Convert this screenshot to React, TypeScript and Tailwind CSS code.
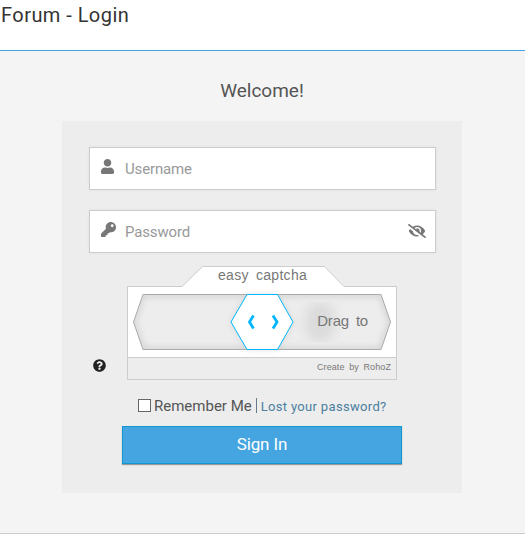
import { FaUser, FaKey, FaQuestionCircle, FaEyeSlash } from "react-icons/fa";

function CaptchaFrame() {
  return (
    <svg className="absolute inset-0" width="270" height="114" viewBox="0 0 270 114" fill="none">
      <defs>
        <radialGradient id="spot" cx="0.5" cy="0.5" r="0.5">
          <stop offset="0" stopColor="#d9d9d9" />
          <stop offset="0.35" stopColor="#dddddd" />
          <stop offset="1" stopColor="#ebebeb" stopOpacity="0" />
        </radialGradient>
        <clipPath id="track">
          <path d="M6.5 56 16 28.5H254L263.5 56 254 83.5H16Z" />
        </clipPath>
        <clipPath id="spotArea">
          <path d="M160 36H240V76H160Z" />
        </clipPath>
        <filter id="soft" x="-20%" y="-20%" width="140%" height="140%">
          <feGaussianBlur stdDeviation="3" />
        </filter>
      </defs>
      <path d="M.5 20.5H55L75.5 .5H197.5L217 20.5H269.5V91.5H.5Z" fill="#fff" />
      <path d="M.5 91.5V20.5H55L75.5 .5H197.5L217 20.5H269.5V91.5" stroke="#ccc" />
      <path d="M.5 91.5H269.5V113.5H.5Z" fill="#ededed" stroke="#ccc" />
      <g clipPath="url(#track)">
        <path d="M0 20H270V90H0Z" fill="#ededed" />
        <path d="M6.5 56 16 28.5H254L263.5 56 254 83.5H16Z" stroke="#ccc" strokeWidth="4" filter="url(#soft)" />
        <ellipse cx="193" cy="56" rx="28" ry="38" fill="url(#spot)" clipPath="url(#spotArea)" />
      </g>
      <path d="M6.5 56 16 28.5H254L263.5 56 254 83.5H16Z" stroke="#aaa" />
      <path d="M104 56 120 28.5H150.5L166 56 150.5 83.5H120Z" fill="#bbb" opacity=".5" filter="url(#soft)" />
      <path d="M104 56 120 28.5H150.5L166 56 150.5 83.5H120Z" fill="#fff" stroke="#00b7ff" />
      <path d="M126.5 49.5 122.5 56 126.5 62.5M146 49.5 150 56 146 62.5" stroke="#00b7ff" strokeWidth="2.8" />
    </svg>
  );
}

const inputBox = "flex h-[43px] items-center border border-[#ccc] bg-white text-[#777] shadow-[0_0_3px_rgba(0,0,0,0.06)]";

export default function App() {
  return (
    <div className="flex h-[534px] w-[525px] flex-col overflow-hidden border-b border-[#ccc] bg-[#f4f4f4] font-['Roboto',sans-serif] whitespace-nowrap">
      <header className="h-[51px] shrink-0 border-b border-[#44a5e0] bg-white pt-[2px] pl-px text-[20px] leading-[26px] tracking-[0.45px] text-[#333]">
        Forum - Login
      </header>
      <main className="flex w-[524px] flex-col items-center">
        <h1 className="mt-[27px] h-[43px] text-[19px] leading-[26px] text-[#555]">Welcome!</h1>
        <form className="flex h-[372px] w-[400px] flex-col bg-[#ededed] px-[27px] pt-[26px]">
          <div className={`${inputBox} mr-[-1px]`}>
            <FaUser className="ml-[10px] h-[15px] w-[15px] -translate-y-[2px]" />
            <span className="ml-[10px] pt-px text-[15px] tracking-[-0.15px] text-[#999]">Username</span>
          </div>
          <div className={`${inputBox} mt-5 mr-[-1px]`}>
            <FaKey className="ml-[11px] h-[15px] w-[15px] -translate-y-[2px]" />
            <span className="ml-[9px] grow pt-px text-[15px] tracking-[-0.15px] text-[#999]">Password</span>
            <FaEyeSlash className="mr-[9px] h-[18px] w-[18px] -translate-y-px" />
          </div>
          <div className="mt-[13px] flex">
            <div className="w-[38px] pt-[93px] pl-1">
              <FaQuestionCircle className="h-[13px] w-[13px] text-[#222]" />
            </div>
            <div className="relative h-[114px] w-[270px] font-['Liberation_Sans',sans-serif] text-[#777]">
              <CaptchaFrame />
              <div className="relative flex h-full flex-col">
                <div className="h-[28px] pl-[91px] text-[14px] leading-[18px] tracking-[0.3px] [word-spacing:3px]">easy captcha</div>
                <div className="flex h-[63px] justify-end pt-[17px] pr-[29px] text-[15px] leading-5 tracking-[-0.2px] [word-spacing:3px]">Drag to</div>
                <div className="pr-[6px] text-right text-[9px] leading-[20px] tracking-[0.1px] [word-spacing:2px]">Create by RohoZ</div>
              </div>
            </div>
          </div>
          <div className="mt-[15px] flex h-[22px] items-center pl-[49px] text-[15px] text-[#555]">
            <span className="h-[13px] w-[13px] -translate-y-px border border-[#666] bg-white" />
            <span className="ml-[3px]">Remember Me</span>
            <span className="ml-[4px] h-[15px] w-px -translate-y-px bg-[#667c8a]" />
            <a className="ml-[4px] pt-px text-[13px] tracking-[0.33px] text-[#4b7f9e]">Lost your password?</a>
          </div>
          <button className="mt-[9px] ml-[33px] h-[38px] w-[280px] border border-[#0f99d0] bg-[#44a5e0] pb-[2px] text-[17px] leading-[34px] tracking-[-0.1px] text-white shadow-[0_1px_1px_rgba(0,0,0,0.35)]">
            Sign In
          </button>
        </form>
      </main>
    </div>
  );
}
